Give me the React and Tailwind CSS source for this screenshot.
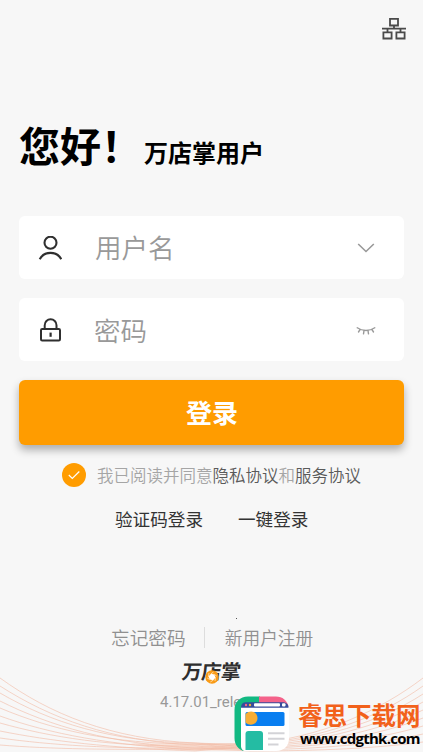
import { useState } from "react";

const leftWaves = [
  "M0 678C50 714 110 739 195 743L250 745",
  "M0 686C50 718 110 741 195 745L250 743",
  "M0 693C50 722 110 742 195 743L250 747",
  "M0 701C50 726 110 744 195 748L250 744",
  "M0 708C50 729 110 744 195 744L250 749",
  "M0 716C50 734 110 745 195 750L250 745",
  "M0 723C50 737 110 747 195 746L250 750",
  "M0 731C50 741 110 748 195 751L250 746",
  "M0 738C50 745 110 749 195 748L250 751",
  "M0 745C50 749 110 750 195 749L250 748",
];

const rightWaves = [
  "M423 678C380 711 320 738 250 744",
  "M423 686C380 717 320 740 250 744",
  "M423 694C380 722 320 741 250 745",
  "M423 702C380 726 320 743 250 746",
  "M423 710C380 731 320 744 250 747",
  "M423 718C380 735 320 746 250 748",
  "M423 726C380 739 320 747 250 749",
  "M423 734C380 744 320 749 250 750",
  "M423 742C380 748 320 751 250 751",
];

function Waves() {
  return (
    <svg
      className="absolute inset-x-0 bottom-0 h-[82px] w-full"
      viewBox="0 670 423 82"
      fill="none"
      stroke="#f1bba5"
      strokeWidth="0.6"
    >
      <path d="M130 743C160 744 200 743 250 744V750C210 752 160 750 130 743z" fill="#f8e2d8" stroke="none" />
      {[...leftWaves, ...rightWaves].map((d) => (
        <path key={d} d={d} />
      ))}
    </svg>
  );
}

function NetworkIcon() {
  return (
    <svg className="h-6 w-6" viewBox="0 0 24 24" fill="none" stroke="#4a4a4a" strokeWidth="1.8">
      <path d="M8 1.9h8v6.6H8zM1.4 15.3h8.2v6.2H1.4zM14.4 15.3h8.2v6.2h-8.2z" />
      <path d="M12 8.5v3M0 11.600h24M5.500 11.600v3.700M18.500 11.600v3.700" />
    </svg>
  );
}

function UserIcon() {
  return (
    <svg className="h-6 w-6" viewBox="0 0 24 24" fill="none" stroke="#2f2f2f" strokeWidth="2.1">
      <circle cx="12.5" cy="6.7" r="6" />
      <path d="M1.700 23.200c2.200-4 6.100-6.300 10.800-6.300s8.600 2.300 10.800 6.300" />
    </svg>
  );
}

function LockIcon() {
  return (
    <svg className="h-6 w-6" viewBox="0 0 24 24" fill="none" stroke="#2f2f2f" strokeWidth="2">
      <rect x="3" y="11" width="19" height="11.500" rx="1.200" />
      <path d="M6.700 11V7.200a5.900 5.900 0 0 1 11.800 0V11" />
      <path d="M12.600 14.600v4.200" strokeWidth="2.200" />
    </svg>
  );
}

function EyeClosedIcon() {
  return (
    <svg className="mt-[2px] h-2.5 w-5" viewBox="0 0 20 10" fill="none" stroke="#999" strokeWidth="1.400" strokeLinecap="round">
      <path d="M1.200 1.800c5 3.500 12.600 3.500 17.600 0M4 3.700L2.500 6M8 4.700L7.500 7.800M12 4.700l.5 3.100M16 3.700L17.500 6" />
    </svg>
  );
}

function Brand() {
  return (
    <div className="relative h-6 w-[60px]">
      <div className="-skew-x-6 whitespace-nowrap text-[20px] leading-6 font-bold tracking-[-0.5px] text-[#2e2e2e]">
        万店掌
      </div>
      <svg className="absolute top-[11px] left-[23px] h-[14px] w-[14px]" viewBox="0 0 14 14">
        <circle cx="7" cy="7" r="6.700" fill="#f99b16" />
        <path d="M6 3.800l3.300.6 1.200 3-2.300 2.800-3.400-.6-1.300-3z" fill="#fff" />
        <path d="M6 3.800L8.500 2M9.300 4.400l2.500 1.800M10.500 7.400L10 11M8.200 10.200L5.300 12M4.800 9.600L2.200 8M3.500 6.600L4 3" stroke="#fff" strokeWidth=".6" />
      </svg>
    </div>
  );
}

function SiteBadge() {
  return (
    <div className="absolute bottom-0 left-[234px] flex h-[56px] w-[189px]">
      <svg className="h-[56px] w-[56px] shrink-0" viewBox="0 0 56 56">
        <path d="M26 .5H14C6 .5.5 6 .5 14v28c0 7 4 11.500 9 13V11h18z" fill="#12b982" />
        <path d="M25 .5h17c6.500 0 11 4 12.500 10H25z" fill="#f4628a" />
        <path d="M7 11h48v31c0 8-5 13-13 13H12c-3 0-5-2-5-5z" fill="#fff" />
        <path d="M7 11.500C7 8 9 6.300 12 6.300h36c4 0 6.500 1.500 6.500 5.400H7z" fill="#364c9c" />
        <rect x="20" y="7.300" width="26" height="3.300" rx="1" fill="#fff" />
        <rect x="48" y="7.300" width="3.500" height="3.300" rx="1" fill="#fff" />
        <circle cx="12" cy="9" r="1.200" fill="#f4628a" />
        <circle cx="16" cy="9" r="1.200" fill="#f6ad35" />
        <rect x="11.500" y="16" width="39" height="14" rx="1.500" fill="#087ef0" />
        <path d="M11.500 18c5-5 12-2 12 4 0 6-7 9-12 4.500z" fill="#f6ad35" />
        <path d="M11.500 54V38c0-2 1-3 3-3H26c2 0 3 1 3 3v16z" fill="#24bca3" />
        <path d="M34 37.300h16.500M34 42.800h16.500M34 48.500h10.500" stroke="#d3d3d7" strokeWidth="2" />
      </svg>
      <div className="ml-[8px] pt-[5px] whitespace-nowrap">
        <div className="h-[28px] text-[24.5px] leading-[28px] font-bold text-[#f2611b]">睿思下载网</div>
        <div className="ml-[2px] font-['Open_Sans',sans-serif] text-[15px] leading-[18px] font-bold tracking-[-0.75px] text-black">
          www.cdgthk.com
        </div>
      </div>
    </div>
  );
}

export default function App() {
  const [agreed, setAgreed] = useState(true);

  return (
    <div className="relative flex h-[752px] w-[423px] flex-col overflow-hidden bg-[#f7f7f7] font-['Noto_Sans_CJK_SC',sans-serif]">
      <Waves />

      <header className="flex h-[108px] justify-end pt-[17px] pr-[17px]">
        <NetworkIcon />
      </header>

      <h1 className="flex h-[108px] items-baseline pt-[6px] pl-[19px] font-bold text-black">
        <span className="text-[41px] leading-[60px]">您好！</span>
        <span className="ml-[2px] text-[24px]">万店掌用户</span>
      </h1>

      <form className="mx-[19px] flex flex-col" onSubmit={(e) => e.preventDefault()}>
        <div className="flex h-[63px] items-center rounded-md bg-white pr-[29px] pl-[19px]">
          <UserIcon />
          <input
            className="mb-[2px] ml-[33px] w-0 flex-1 text-[26.5px] font-[350] text-black outline-none placeholder:text-[#999]"
            placeholder="用户名"
          />
          <svg className="h-[10px] w-[18px]" viewBox="0 0 18 10" fill="none" stroke="#999" strokeWidth="1.600">
            <path d="M1.200 1L9 8.500 16.800 1" />
          </svg>
        </div>

        <div className="mt-[19px] flex h-[63px] items-center rounded-md bg-white pr-[28px] pl-[19px]">
          <LockIcon />
          <input
            className="ml-[32px] w-0 flex-1 text-[26.5px] font-[350] text-black outline-none placeholder:text-[#999]"
            placeholder="密码"
            type="password"
          />
          <EyeClosedIcon />
        </div>

        <button className="mt-[19px] h-[65px] rounded-md bg-[#ff9c00] pb-[2px] pl-[1px] text-[26px] font-bold text-white shadow-[0_5px_8px_rgba(0,0,0,0.3)]">
          登录
        </button>
      </form>

      <div className="mt-[18px] flex h-6 items-center pl-[62px]">
        <button
          className={`flex h-6 w-6 items-center justify-center rounded-full ${agreed ? "bg-[#ff9c00]" : "bg-gray-300"}`}
          onClick={() => setAgreed(!agreed)}
        >
          <svg className="h-3 w-3" viewBox="0 0 12 12" fill="none" stroke="#fff" strokeWidth="1.200">
            <path d="M.8 6l3.500 3.500 7-7" />
          </svg>
        </button>
        <p className="ml-[11px] whitespace-nowrap text-[16.5px] font-[350] text-[#a5a5a5]">
          我已阅读并同意<span className="text-[#5a5a5a]">隐私协议</span>和<span className="text-[#5a5a5a]">服务协议</span>
        </p>
      </div>

      <div className="mt-[19px] flex h-[26px] items-center gap-[35px] pl-[115px] text-[17.6px] text-[#333]">
        <a>验证码登录</a>
        <a>一键登录</a>
      </div>

      <footer className="mt-[86px] flex flex-col">
        <span className="ml-[236px] h-px w-px bg-[#555]" />
        <div className="mt-[5px] flex h-[26px] items-center pl-[111px] font-[350] text-[#909090]">
          <a className="text-[18.7px]">忘记密码</a>
          <span className="ml-[18px] h-[21px] w-px bg-[#ddd]" />
          <a className="ml-[20px] text-[17.7px]">新用户注册</a>
        </div>
        <div className="mt-[9px] flex justify-center">
          <Brand />
        </div>
        <p className="mt-[9px] pl-[160px] font-[Roboto,sans-serif] text-[15px] leading-5 text-[#999]">
          4.17.01_release
        </p>
      </footer>

      <SiteBadge />
    </div>
  );
}
